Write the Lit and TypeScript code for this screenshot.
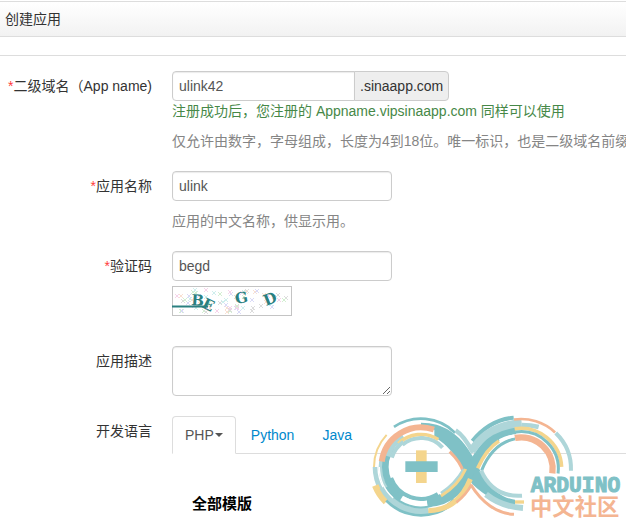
import { LitElement, css, html, svg } from "lit";
import { customElement, state } from "lit/decorators.js";

const TEAL = "#7fc1c6";
const PALE = "#aed6d9";
const YELLOW = "#f4d58d";
const SALMON = "#f4b592";

type Band = { d: string; color: string; width: number };

/** Circular arc, angles in degrees measured clockwise from the right. */
function arc(cx: number, cy: number, r: number, from: number, to: number, width: number, color: string): Band {
  const point = (deg: number) => {
    const a = (deg * Math.PI) / 180;
    return `${(cx + r * Math.cos(a)).toFixed(1)} ${(cy + r * Math.sin(a)).toFixed(1)}`;
  };
  const large = Math.abs(to - from) > 180 ? 1 : 0;
  const sweep = to > from ? 1 : 0;
  return { d: `M${point(from)}A${r} ${r} 0 ${large} ${sweep} ${point(to)}`, color, width };
}

const left = (r: number, from: number, to: number, width: number, color: string) =>
  arc(168, 186, r, from, to, width, color);
const right = (r: number, from: number, to: number, width: number, color: string) =>
  arc(468, 192, r, from, to, width, color);

const BANDS: Band[] = [
  // left ring
  left(145, 236, 315, 8, TEAL),
  left(141, 180, 223, 6, YELLOW),
  left(138, 150, 180, 14, PALE),
  left(148, 135, 158, 20, YELLOW),
  left(142, 44, 136, 14, TEAL),
  left(132, 80, 152, 18, PALE),
  left(121, 150, 190, 12, PALE),
  left(107, 120, 215, 20, TEAL),
  left(114, 75, 150, 20, TEAL),
  left(96, 58, 160, 13, TEAL),
  left(110, 80, 122, 16, "#ffffff"),
  left(111, 55, 80, 24, TEAL),
  left(125, 132, 180, 4, "#ffffff"),
  left(105, 198, 240, 16, PALE),
  left(119, 188, 289, 18, SALMON),
  left(87, 230, 318, 12, PALE),
  left(98, 226, 302, 10, YELLOW),
  left(92, 198, 235, 12, PALE),
  { d: "M272 76C294 90 308 112 324 143", color: PALE, width: 13 },
  { d: "M254 140C275 160 290 180 296 205", color: SALMON, width: 9 },
  // rising strand
  { d: "M190 292C255 290 291 246 318 194C344 132 394 80 452 73", color: TEAL, width: 28 },
  { d: "M228 265C262 243 280 221 296 193", color: PALE, width: 9 },
  { d: "M228 273C264 251 286 228 302 192", color: YELLOW, width: 9 },
  { d: "M190 317C256 316 294 278 316 222", color: YELLOW, width: 15 },
  { d: "M274 292Q303 270 320 238", color: SALMON, width: 8 },
  { d: "M322 108C355 68 400 42 446 38", color: TEAL, width: 12 },
  { d: "M320 139C350 88 395 60 470 54", color: PALE, width: 24 },
  { d: "M470 60C490 60 506 62 521 66", color: PALE, width: 14 },
  { d: "M338 190C356 150 376 124 402 108", color: YELLOW, width: 11 },
  { d: "M350 196C370 146 400 112 450 101", color: TEAL, width: 9 },
  { d: "M404 107Q425 95 448 93", color: "#ffffff", width: 9 },
  // right ring
  right(150, 262, 313, 8, SALMON),
  right(150, 314, 362, 12, PALE),
  right(122, 261, 357, 11, YELLOW),
  right(112, 262, 367, 9, TEAL),
  right(95, 259, 368, 19, SALMON),
  // falling strand
  { d: "M348 196C370 246 410 276 471 272", color: PALE, width: 12 },
  { d: "M363 268Q410 305 474 309", color: PALE, width: 18 },
  { d: "M318 240C350 292 396 326 447 328", color: SALMON, width: 9 },
  { d: "M450 291H477", color: YELLOW, width: 10 },
  // plus sign
  { d: "M169 136V234", color: YELLOW, width: 32 },
  { d: "M121 185H218", color: TEAL, width: 32 },
];

const FALLING =
  "M168 53C235 53 284 86 322 152C355 215 385 276 450 284V300C398 298 346 266 312 226C292 186 262 126 208 96V74L168 66Z";

const SPECKS = Array.from({ length: 70 }, (_, i) => {
  const noise = (seed: number) => {
    const v = Math.sin(i * 12.9898 + seed) * 43758.5453;
    return v - Math.floor(v);
  };
  return {
    x: 4 + Math.round(noise(1) * 112),
    y: 4 + Math.round(noise(7) * 22),
    color: ["#f6d3ea", "#d3efd1", "#dadaf7", "#f9e0d2", "#dcdcdc", "#cfeeed"][i % 6],
  };
});

@customElement("community-mark")
class CommunityMark extends LitElement {
  static styles = css`
    :host {
      display: block;
    }
    svg {
      display: block;
      width: 100%;
    }
    .latin {
      font: bold 64px "Liberation Mono", monospace;
      stroke-width: 3;
    }
    .han {
      font: bold 67px "Noto Sans CJK SC", sans-serif;
    }
  `;

  render() {
    return html`
      <svg viewBox="0 0 783 354" role="img" aria-label="Arduino 中文社区">
        <path d=${FALLING} fill=${TEAL} />
        ${BANDS.map(
          (b) => svg`<path d=${b.d} fill="none" stroke=${b.color} stroke-width=${b.width} />`,
        )}
        <text class="latin" x="497" y="262" fill=${TEAL} stroke=${TEAL}>ARDUINO</text>
        <text class="han" x="495" y="331" fill=${SALMON}>中文社区</text>
      </svg>
    `;
  }
}

@customElement("captcha-image")
class CaptchaImage extends LitElement {
  static styles = css`
    :host {
      display: block;
    }
    svg {
      display: block;
    }
    text {
      font: bold 15px "DejaVu Serif", serif;
      fill: #2a8080;
    }
  `;

  render() {
    return html`
      <svg width="120" height="30" viewBox="0 0 120 30" role="img" aria-label="验证码">
        <rect x="0.5" y="0.5" width="119" height="29" fill="#fff" stroke="#c4c4c4" />
        ${SPECKS.map(
          (s) => svg`<path d="M${s.x - 2} ${s.y - 2}l4 4m0-4l-4 4" stroke=${s.color} fill="none" />`,
        )}
        <path d="M0 20.5H36" stroke="#2a8080" stroke-width="2" />
        <text x="19" y="19" transform="rotate(4 19 19)">B</text>
        <text x="29" y="21" transform="rotate(26 29 21)">E</text>
        <text x="64" y="18" transform="rotate(-10 64 18)">G</text>
        <text x="94" y="20" transform="rotate(-22 94 20)">D</text>
      </svg>
    `;
  }
}

@customElement("app-root")
class AppRoot extends LitElement {
  static styles = css`
    :host {
      display: block;
      position: relative;
      min-height: 100vh;
      overflow: hidden;
      box-sizing: border-box;
      background: #fff;
      color: #333;
      font: 14px/20px "Liberation Sans", "Noto Sans CJK SC", sans-serif;
    }
    * {
      box-sizing: border-box;
    }
    .title {
      margin: 1px 0 18px;
      padding: 8px 5px;
      border: solid #ddd;
      border-width: 1px 0;
      background: linear-gradient(#fff, #f2f2f2);
      font-size: 14px;
      line-height: 18px;
      font-weight: normal;
    }
    form {
      display: grid;
      gap: 20px;
      padding-top: 15px;
      border-top: 1px solid #ddd;
    }
    .row {
      display: grid;
      grid-template-columns: 152px minmax(0, 1fr);
      column-gap: 20px;
    }
    .label {
      padding-top: 5px;
      text-align: right;
      white-space: nowrap;
    }
    .required {
      color: #ff3b3b;
    }
    .field {
      display: block;
      width: 220px;
      height: 30px;
      margin: 0;
      padding: 4px 6px;
      border: 1px solid #ccc;
      border-radius: 4px;
      background: #fff;
      box-shadow: inset 0 1px 1px rgba(0, 0, 0, 0.08);
      color: #555;
      font: inherit;
      outline: none;
    }
    textarea.field {
      height: 50px;
    }
    .group {
      display: flex;
    }
    .group .field {
      width: 183px;
      border-radius: 4px 0 0 4px;
    }
    .suffix {
      margin-left: -1px;
      padding: 4px 5px;
      border: 1px solid #ccc;
      border-radius: 0 4px 4px 0;
      background: #eee;
    }
    .success,
    .hint {
      margin: 0;
      white-space: nowrap;
    }
    .success {
      color: #468847;
    }
    .hint {
      margin-top: 10px;
      color: #858585;
    }
    .captcha {
      margin: 5px 0 10px;
    }
    .tabs {
      display: flex;
      gap: 2px;
      height: 38px;
      border-bottom: 1px solid #ddd;
    }
    .tab {
      height: 38px;
      padding: 8px 12px;
      border: 1px solid transparent;
      border-radius: 4px 4px 0 0;
      color: #08c;
      text-decoration: none;
    }
    .active {
      display: flex;
      align-items: center;
      gap: 1px;
      border-color: #ddd;
      border-bottom-color: #fff;
      background: #fff;
      color: #555;
    }
    .caret {
      border: 4px solid transparent;
      border-top-color: #555;
      border-bottom: 0;
    }
    .templates {
      margin: 40px 0 0 20px;
      color: #000;
      font-size: 15px;
      line-height: 20px;
      font-weight: bold;
    }
    .mark {
      position: absolute;
      right: 0;
      bottom: 0;
      width: 261px;
      pointer-events: none;
    }
  `;

  @state() private language = "PHP";

  private pick(event: Event, name: string) {
    event.preventDefault();
    this.language = name;
  }

  render() {
    const star = html`<span class="required">*</span>`;
    return html`
      <h1 class="title">创建应用</h1>
      <form>
        <div class="row">
          <label class="label" for="domain">${star}二级域名（App name)</label>
          <div>
            <div class="group">
              <input class="field" id="domain" type="text" value="ulink42" />
              <span class="suffix">.sinaapp.com</span>
            </div>
            <p class="success">注册成功后，您注册的 Appname.vipsinaapp.com 同样可以使用</p>
            <p class="hint">仅允许由数字，字母组成，长度为4到18位。唯一标识，也是二级域名前缀</p>
          </div>
        </div>
        <div class="row">
          <label class="label" for="name">${star}应用名称</label>
          <div>
            <input class="field" id="name" type="text" value="ulink" />
            <p class="hint">应用的中文名称，供显示用。</p>
          </div>
        </div>
        <div class="row">
          <label class="label" for="code">${star}验证码</label>
          <div>
            <input class="field" id="code" type="text" value="begd" />
            <captcha-image class="captcha"></captcha-image>
          </div>
        </div>
        <div class="row">
          <label class="label" for="about">应用描述</label>
          <textarea class="field" id="about"></textarea>
        </div>
        <div class="row">
          <span class="label">开发语言</span>
          <div>
            <nav class="tabs" aria-label="开发语言">
              ${["PHP", "Python", "Java"].map(
                (name) => html`<a
                  class="tab ${name === this.language ? "active" : ""}"
                  href="#${name}"
                  @click=${(e: Event) => this.pick(e, name)}
                  >${name}${name === "PHP" ? html`<span class="caret"></span>` : ""}</a
                >`,
              )}
            </nav>
            <h2 class="templates">全部模版</h2>
          </div>
        </div>
      </form>
      <community-mark class="mark"></community-mark>
    `;
  }
}
